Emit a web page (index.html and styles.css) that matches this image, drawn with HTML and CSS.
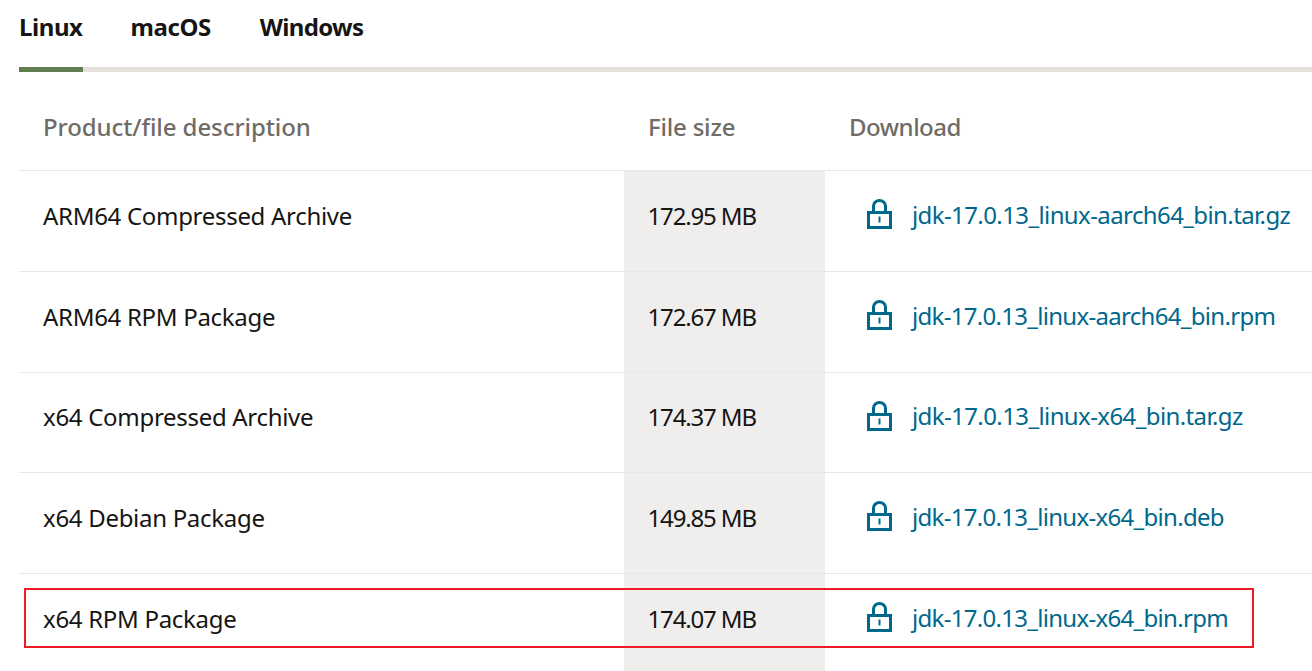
FILE: index.html
```html
<!DOCTYPE html>
<html lang="en">
<head>
<meta charset="utf-8">
<title>JDK downloads</title>
<link rel="stylesheet" href="styles.css">
</head>
<body>
<svg class="defs" width="0" height="0" aria-hidden="true">
  <symbol id="lock" viewBox="0 0 25 30">
    <path d="M6.5 12V7a6 5.5 0 0 1 12 0V12" fill="none" stroke="currentColor" stroke-width="3"/>
    <rect x="1.5" y="13.5" width="22" height="15" fill="none" stroke="currentColor" stroke-width="3"/>
    <rect x="11.5" y="17.5" width="2" height="6" fill="currentColor"/>
  </symbol>
</svg>
<main class="page">
  <nav class="tabs">
    <a class="tab active">Linux</a>
    <a class="tab">macOS</a>
    <a class="tab">Windows</a>
  </nav>
  <div class="table">
    <div class="row head">
      <div class="c desc">Product/file description</div>
      <div class="c size">File size</div>
      <div class="c dl">Download</div>
    </div>
    <div class="row r1">
      <div class="c desc">ARM64 Compressed Archive</div>
      <div class="c size">172.95 MB</div>
      <div class="c dl"><svg class="lock"><use href="#lock"/></svg><a class="link tar">jdk-17.0.13_linux-aarch64_bin.tar.gz</a></div>
    </div>
    <div class="row r1">
      <div class="c desc">ARM64 RPM Package</div>
      <div class="c size">172.67 MB</div>
      <div class="c dl"><svg class="lock"><use href="#lock"/></svg><a class="link">jdk-17.0.13_linux-aarch64_bin.rpm</a></div>
    </div>
    <div class="row r2">
      <div class="c desc">x64 Compressed Archive</div>
      <div class="c size">174.37 MB</div>
      <div class="c dl"><svg class="lock"><use href="#lock"/></svg><a class="link tar">jdk-17.0.13_linux-x64_bin.tar.gz</a></div>
    </div>
    <div class="row r1">
      <div class="c desc">x64 Debian Package</div>
      <div class="c size">149.85 MB</div>
      <div class="c dl"><svg class="lock"><use href="#lock"/></svg><a class="link">jdk-17.0.13_linux-x64_bin.deb</a></div>
    </div>
    <div class="row r1">
      <div class="c desc">x64 RPM Package</div>
      <div class="c size">174.07 MB</div>
      <div class="c dl"><svg class="lock"><use href="#lock"/></svg><a class="link">jdk-17.0.13_linux-x64_bin.rpm</a></div>
    </div>
  </div>
  <div class="highlight"></div>
</main>
</body>
</html>
```
FILE: styles.css
```css
html, body { margin: 0; padding: 0; background: #fff; overflow: hidden; }
.defs { position: absolute; }
.page {
  position: relative;
  height: 671px;
  padding-left: 19px;
  font-family: "Noto Sans", "Open Sans", sans-serif;
  color: #161513;
  overflow: hidden;
}
.tabs {
  display: flex;
  gap: 48px;
  height: 67px;
  border-bottom: 5px solid #e4e1dd;
}
.tab {
  height: 72px;
  box-sizing: border-box;
  padding-top: 10px;
  font-size: 24px;
  line-height: 33px;
  font-weight: 700;
  letter-spacing: -0.42px;
  color: #161513;
}
.tab:last-child { margin-left: 1px; letter-spacing: -0.7px; }
.tab.active { border-bottom: 5px solid #5f7d4f; }
.table { width: 1293px; }
.row {
  display: grid;
  grid-template-columns: 605px 201px 1fr;
  border-bottom: 1px solid #e6e6e6;
  height: 100px;
  font-size: 24px;
  line-height: 32px;
}
.r2 { height: 99px; }
.row:last-child { border-bottom: 0; }
.row.head { height: 98px; color: #6f6c67; font-weight: 500; }
.c { display: flex; align-items: center; padding-left: 24px; padding-bottom: 11px; white-space: nowrap; }
.head .c { padding-bottom: 0; padding-top: 11px; }
.desc { letter-spacing: -0.3px; }
.size { background: #efeeec; letter-spacing: -1.15px; padding-left: 23.5px; }
.head .desc { letter-spacing: -0.08px; }
.head .size { background: none; letter-spacing: -0.2px; padding-left: 24px; }
.head .dl { letter-spacing: -0.5px; }
.row:not(.head) .dl { padding-left: 42px; }
.lock { width: 25px; height: 30px; color: #00688c; flex: none; margin-right: 20px; margin-bottom: 3px; }
.link { color: #00688c; letter-spacing: -0.7px; position: relative; top: -1px; }
.link.tar { letter-spacing: -0.6px; }
.highlight {
  position: absolute;
  left: 24px;
  top: 588px;
  width: 1226px;
  height: 56px;
  border: 2px solid #ed1c24;
}
```
